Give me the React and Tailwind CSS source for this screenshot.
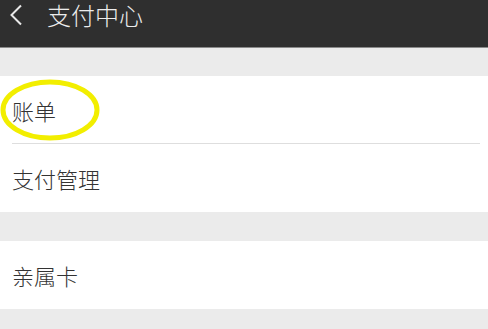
import React from "react";

const font = { fontFamily: '"Noto Sans CJK SC", "Noto Sans", sans-serif' };

const Row = ({ label, divider, children }) => (
  <div className="relative h-[68px] bg-white flex items-center pl-[12px]">
    <span className="text-[22px] leading-[30px] font-light text-[#333333]">{label}</span>
    {children}
    {divider && (
      <div className="absolute bottom-0 left-[12px] right-[8px] h-px bg-[#dedede]" />
    )}
  </div>
);

export default function App() {
  return (
    <div className="w-[488px] h-[329px] overflow-hidden bg-[#ebebeb]" style={font}>
      <div className="h-[48px] bg-[#2f2f2f] border-b border-[#8a8a8a] flex items-start">
        <div className="flex items-center h-[30px] pl-[9px]">
          <svg width="14" height="22" viewBox="0 0 14 22" fill="none">
            <path d="M12 1.5 L2.5 11 L12 20.5" stroke="#e8e8e8" strokeWidth="2" />
          </svg>
          <span className="ml-[24px] text-[24px] leading-[30px] font-light text-[#ececec]">
            支付中心
          </span>
        </div>
      </div>
      <div className="h-[28px]" />
      <Row label="账单" divider>
        <svg
          className="absolute left-0 top-[3px]"
          width="100"
          height="64"
          viewBox="0 0 100 64"
        >
          <ellipse cx="50" cy="31" rx="47" ry="28" fill="none" stroke="#f2ee00" strokeWidth="5" />
        </svg>
      </Row>
      <Row label="支付管理" />
      <div className="h-[29px]" />
      <Row label="亲属卡" />
    </div>
  );
}
